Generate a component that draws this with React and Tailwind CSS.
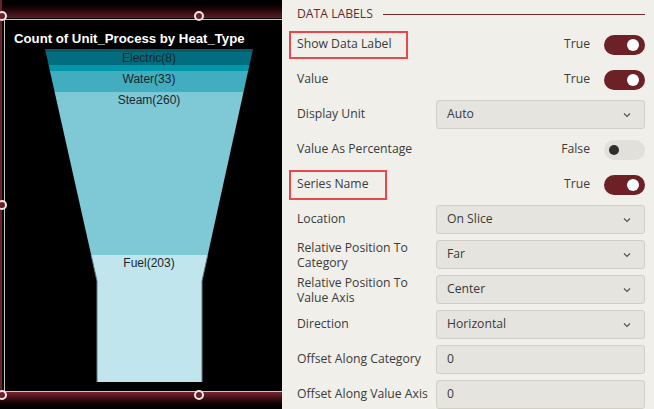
const segs = [
  { pts: "45,49 253,49 252.34,52 45.67,52", fill: "#0c5867" },
  { pts: "45.67,52 252.34,52 249.48,65 48.59,65", fill: "#016d7e" },
  { pts: "48.59,65 249.48,65 248.16,71 49.93,71", fill: "#0196a9" },
  { pts: "49.93,71 248.16,71 243.55,92 54.64,92", fill: "#41adbf" },
  { pts: "54.64,92 243.55,92 207.72,255 91.17,255", fill: "#7fc9d6" },
  { pts: "91.17,255 207.72,255 202,281 202,382 97,382 97,281", fill: "#c0e5ec" },
];

const labels = [
  { text: "Electric(8)", y: 62 },
  { text: "Water(33)", y: 83 },
  { text: "Steam(260)", y: 104 },
  { text: "Fuel(203)", y: 267 },
];

const Handle = ({ className }) => (
  <div className={"absolute h-[10px] w-[10px] rounded-full border-2 border-[#f1e6e7] bg-[#6b2129] " + className} />
);

const ChartPanel = () => (
  <div className="relative h-[409px] w-[282px] shrink-0 overflow-hidden bg-black">
    <div className="h-[49px] pl-[14px] pt-[31px]">
      <p className="text-[13.2px] font-bold leading-[16px] text-white" style={{ fontFamily: '"Liberation Sans", Arial, sans-serif' }}>
        Count of Unit_Process by Heat_Type
      </p>
    </div>
    <svg width="282" height="360" viewBox="0 49 282 360" className="block">
      {segs.map((s) => (
        <polygon key={s.pts} points={s.pts} fill={s.fill} />
      ))}
      <path d="M91.17 255 L97 281 L97 382" stroke="#5f7f86" strokeWidth="1" fill="none" />
      <path d="M207.72 255 L202 281 L202 382" stroke="#5f7f86" strokeWidth="1" fill="none" />
      {labels.map((l) => (
        <text
          key={l.text}
          x="149"
          y={l.y}
          textAnchor="middle"
          fontSize="12"
          fill="#1a262c"
          fontFamily='"Liberation Sans", Arial, sans-serif'
        >
          {l.text}
        </text>
      ))}
    </svg>

    {/* selection frame */}
    <div className="absolute left-0 right-0 top-0 h-[18px] bg-gradient-to-b from-black to-[#5e1d26]" />
    <div className="absolute left-0 right-0 top-[19px] h-px bg-[#c9c5c5]" />
    <div className="absolute bottom-0 left-0 top-0 w-[2px] bg-[#6b2129]" />
    <div className="absolute left-[4px] top-[19px] h-[373px] w-px bg-[#c9c5c5]" />
    <div className="absolute left-0 right-0 top-[391px] h-px bg-[#c9c5c5]" />
    <div className="absolute bottom-0 left-0 right-0 h-[17px] bg-gradient-to-b from-[#7a2631] to-black" />
    <Handle className="left-[-3px] top-[11px]" />
    <Handle className="left-[194px] top-[11px]" />
    <Handle className="left-[-3px] top-[200px]" />
    <Handle className="left-[-3px] top-[390px]" />
    <Handle className="left-[194px] top-[390px]" />
  </div>
);

const Toggle = ({ on }) =>
  on ? (
    <div className="flex h-[20px] w-[41px] items-center justify-end rounded-full bg-[#6b2126] pr-[6px]">
      <div className="h-[12px] w-[12px] rounded-full bg-white" />
    </div>
  ) : (
    <div className="flex h-[20px] w-[41px] items-center rounded-full bg-[#e2e0db] pl-[5px]">
      <div className="h-[10px] w-[10px] rounded-full bg-[#2e2e2e]" />
    </div>
  );

const Chevron = () => (
  <svg width="10" height="6" viewBox="0 0 10 6" className="shrink-0">
    <path d="M2 1.5 L5 4.5 L8 1.5" fill="none" stroke="#555" strokeWidth="1.2" />
  </svg>
);

const Field = ({ value, select }) => (
  <div className="flex h-[29px] w-[209px] items-center justify-between rounded-[3px] border border-[#d2cfc7] bg-[#e6e4df] pl-[10px] pr-[12px] text-[#3a3a3a]">
    <span>{value}</span>
    {select && <Chevron />}
  </div>
);

const rows = [
  { label: "Show Data Label", toggle: true, state: "True", box: "w-[119px] h-[28px]" },
  { label: "Value", toggle: true, state: "True" },
  { label: "Display Unit", field: "Auto", select: true },
  { label: "Value As Percentage", toggle: false, state: "False" },
  { label: "Series Name", toggle: true, state: "True", box: "w-[98px] h-[30px]" },
  { label: "Location", field: "On Slice", select: true },
  { label: ["Relative Position To", "Category"], field: "Far", select: true },
  { label: ["Relative Position To", "Value Axis"], field: "Center", select: true },
  { label: "Direction", field: "Horizontal", select: true },
  { label: "Offset Along Category", field: "0" },
  { label: "Offset Along Value Axis", field: "0" },
];

const Label = ({ row }) => {
  if (Array.isArray(row.label)) {
    return (
      <div className="leading-[15px]">
        {row.label.map((t) => (
          <div key={t}>{t}</div>
        ))}
      </div>
    );
  }
  if (row.box) {
    return (
      <div className={"-ml-[8px] flex items-center border-2 border-[#e8474d] pl-[6px] " + row.box}>
        {row.label}
      </div>
    );
  }
  return <div>{row.label}</div>;
};

const SettingsPanel = () => (
  <div
    className="flex h-[409px] flex-1 flex-col bg-[#f0efea] pl-[15px] pr-[9px] pt-[1px] text-[12.2px] text-[#3b3b3b]"
    style={{ fontFamily: '"Open Sans", sans-serif' }}
  >
    <div className="flex h-[26px] shrink-0 items-center gap-[10px]">
      <span className="text-[#5a3035]">DATA LABELS</span>
      <div className="h-px flex-1 bg-[#6b2a30]" />
    </div>
    {rows.map((row, i) => (
      <div key={i} className="flex h-[35px] shrink-0 items-center justify-between">
        <Label row={row} />
        {row.field !== undefined ? (
          <Field value={row.field} select={row.select} />
        ) : (
          <div className="flex items-center gap-[14px]">
            <span>{row.state}</span>
            <Toggle on={row.toggle} />
          </div>
        )}
      </div>
    ))}
  </div>
);

export default function App() {
  return (
    <div className="flex h-[409px] w-[654px] overflow-hidden">
      <ChartPanel />
      <SettingsPanel />
    </div>
  );
}
